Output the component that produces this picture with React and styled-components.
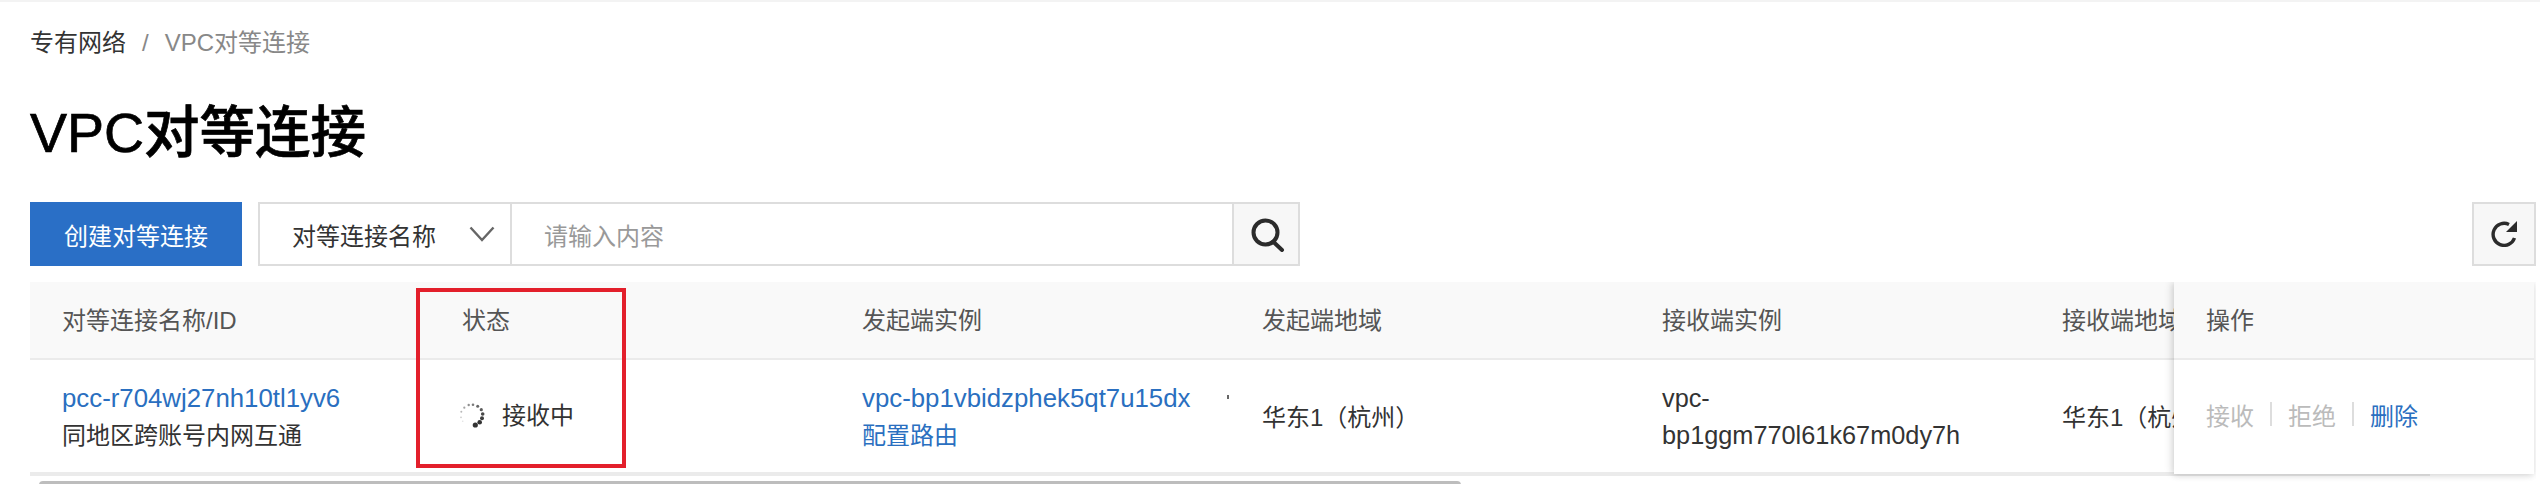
import React from "react";
import styled, { createGlobalStyle } from "styled-components";

const Global = createGlobalStyle`
  html, body { margin: 0; padding: 0; background: #fff; }
  body { font-family: "Liberation Sans", "Noto Sans CJK SC", sans-serif; font-size: 24px; color: #333; overflow: hidden; }
  * { box-sizing: border-box; }
`;

const Page = styled.div`
  width: 2540px;
  height: 484px;
  overflow: hidden;
  border-top: 2px solid #f3f3f3;
  padding: 0 4px 0 30px;
`;
const Breadcrumb = styled.nav`
  display: flex;
  align-items: center;
  height: 36px;
  margin-top: 23px;
  line-height: 36px;
`;
const Crumb = styled.span`
  color: ${(p) => (p.$current ? "#888" : "#333")};
`;
const CrumbSep = styled.span`
  color: #888;
  margin: 0 16px 0 16px;
`;
const Title = styled.h1`
  margin: 34px 0 0;
  font-size: 55.5px;
  line-height: 76px;
  font-weight: 500;
  color: #000;
  -webkit-text-stroke: 0.7px #000;
`;
const Toolbar = styled.div`
  display: flex;
  align-items: stretch;
  height: 64px;
  margin-top: 31px;
`;
const PrimaryButton = styled.button`
  width: 212px;
  border: 0;
  padding: 0;
  background: #2a6fc6;
  color: #fff;
  font: inherit;
`;
const SearchGroup = styled.div`
  display: flex;
  width: 1042px;
  margin-left: 16px;
  border: 2px solid #ddd;
`;
const SelectBox = styled.div`
  display: flex;
  align-items: center;
  justify-content: space-between;
  width: 252px;
  padding: 0 15px 0 32px;
  border-right: 2px solid #ddd;
  color: #333;
`;
const SearchInput = styled.div`
  flex: 1;
  display: flex;
  align-items: center;
  padding-left: 32px;
  color: #999;
`;
const IconButton = styled.div`
  display: flex;
  align-items: center;
  justify-content: center;
  background: #f7f7f7;
`;
const SearchButton = styled(IconButton)`
  width: 66px;
  padding: 2px 0 0 3px;
  border-left: 2px solid #ddd;
`;
const RefreshButton = styled(IconButton)`
  width: 64px;
  margin-left: auto;
  border: 2px solid #ddd;
`;
const TableWrap = styled.div`
  position: relative;
  margin-top: 16px;
  height: 202px;
  overflow: hidden;
`;
const Row = styled.div`
  display: grid;
  grid-template-columns: repeat(6, 400px);
  width: 2400px;
`;
const HeadRow = styled(Row)`
  height: 78px;
  background: #f9f9f9;
  border-bottom: 2px solid #ebebeb;
`;
const BodyRow = styled(Row)`
  height: 116px;
  border-bottom: 4px solid #ebebeb;
`;
const HeadCell = styled.div`
  display: flex;
  align-items: center;
  padding: 0 32px 3px;
  color: #555;
`;
const Cell = styled.div`
  display: flex;
  flex-direction: column;
  justify-content: center;
  padding: 2px 32px 0;
  line-height: 37px;
  color: #333;
`;
const Latin = styled.span`
  font-size: 25.3px;
  white-space: nowrap;
`;
const LinkLatin = styled(Latin)`
  font-size: 25.8px;
  color: #2a6fc0;
`;
const LinkText = styled.span`
  color: #2a6fc0;
`;
const InstanceLine = styled.span`
  position: relative;
  white-space: nowrap;
`;
const TinyDot = styled.i`
  position: absolute;
  left: 365px;
  top: 15px;
  width: 2px;
  height: 4px;
  background: #666;
`;
const StatusLine = styled.div`
  display: flex;
  align-items: center;
  gap: 17px;
  margin: -4px 0 0 -3px;
`;
const Scrollbar = styled.div`
  width: 1422px;
  height: 8px;
  margin: 5px 0 0 9px;
  border-radius: 4px;
  background: #bdbdbd;
`;
const FrozenPanel = styled.div`
  position: absolute;
  top: 0;
  right: 2px;
  width: 360px;
  height: 192px;
  background: #fff;
  box-shadow: -2px 0 8px rgba(0, 0, 0, 0.14), 0 2px 6px rgba(0, 0, 0, 0.08);
`;
const FrozenHead = styled(HeadCell)`
  height: 78px;
  background: #f9f9f9;
  border-bottom: 2px solid #ebebeb;
`;
const Actions = styled.div`
  display: flex;
  align-items: center;
  height: 114px;
  padding: 0 0 6px 32px;
`;
const Action = styled.span`
  color: ${(p) => (p.$disabled ? "#bbb" : "#2a6fc0")};
`;
const ActionSep = styled.i`
  width: 2px;
  height: 24px;
  margin: 0 16px;
  background: #ddd;
`;
const Highlight = styled.div`
  position: absolute;
  left: 386px;
  top: 6px;
  width: 210px;
  height: 180px;
  border: 4px solid #e31f2b;
`;

const spinnerDots = [
  [3.3, 10, 2.6, 1], [7.7, 7.3, 2.3, 1], [10, 3.3, 2, 0.95], [10.7, -1, 1.8, 0.9],
  [9.3, -5.3, 1.6, 0.8], [5.7, -8.7, 1.5, 0.75], [1, -10.3, 1.3, 0.65], [-3.3, -10, 1.2, 0.55],
  [-7.7, -7.3, 1.1, 0.45], [-10.7, -3.3, 1, 0.35], [-11, 2.3, 0.9, 0.25], [-9.3, 6.3, 0.8, 0.15],
];

const Spinner = () => (
  <svg width="26" height="26" viewBox="-13 -13 26 26">
    {spinnerDots.map(([x, y, r, o]) => (
      <circle key={`${x}${y}`} cx={x} cy={y} r={r} fill="#333" opacity={o} />
    ))}
  </svg>
);

const Chevron = () => (
  <svg width="26" height="16" viewBox="0 0 26 16" fill="none" stroke="#666" strokeWidth="2.4">
    <path d="M1.5 1.5 13 14 24.5 1.5" />
  </svg>
);

const SearchIcon = () => (
  <svg width="34" height="34" viewBox="0 0 34 34" fill="none" stroke="#2b2b2b" strokeWidth="4">
    <circle cx="14.5" cy="14.5" r="12" />
    <path d="M22 23.5 31 32" strokeLinecap="round" />
  </svg>
);

const RefreshIcon = () => (
  <svg width="26" height="26" viewBox="0 0 26 26" fill="none">
    <path d="M23.5 17A11 11 0 1 1 18 3.5" stroke="#2b2b2b" strokeWidth="3.4" />
    <path d="M26 0v11H15z" fill="#2b2b2b" />
  </svg>
);

export default function App() {
  return (
    <Page>
      <Global />
      <Breadcrumb>
        <Crumb>专有网络</Crumb>
        <CrumbSep>/</CrumbSep>
        <Crumb $current>VPC对等连接</Crumb>
      </Breadcrumb>
      <Title>VPC对等连接</Title>
      <Toolbar>
        <PrimaryButton>创建对等连接</PrimaryButton>
        <SearchGroup>
          <SelectBox>
            对等连接名称
            <Chevron />
          </SelectBox>
          <SearchInput>请输入内容</SearchInput>
          <SearchButton>
            <SearchIcon />
          </SearchButton>
        </SearchGroup>
        <RefreshButton>
          <RefreshIcon />
        </RefreshButton>
      </Toolbar>
      <TableWrap>
        <HeadRow>
          <HeadCell>对等连接名称/ID</HeadCell>
          <HeadCell>状态</HeadCell>
          <HeadCell>发起端实例</HeadCell>
          <HeadCell>发起端地域</HeadCell>
          <HeadCell>接收端实例</HeadCell>
          <HeadCell>接收端地域</HeadCell>
        </HeadRow>
        <BodyRow>
          <Cell>
            <LinkLatin>pcc-r704wj27nh10tl1yv6</LinkLatin>
            <span>同地区跨账号内网互通</span>
          </Cell>
          <Cell>
            <StatusLine>
              <Spinner />
              接收中
            </StatusLine>
          </Cell>
          <Cell>
            <InstanceLine>
              <LinkLatin>vpc-bp1vbidzphek5qt7u15dx</LinkLatin>
              <TinyDot />
            </InstanceLine>
            <LinkText>配置路由</LinkText>
          </Cell>
          <Cell>
            <span>华东1（杭州）</span>
          </Cell>
          <Cell>
            <Latin>vpc-</Latin>
            <Latin>bp1ggm770l61k67m0dy7h</Latin>
          </Cell>
          <Cell>
            <span>华东1（杭州）</span>
          </Cell>
        </BodyRow>
        <Scrollbar />
        <FrozenPanel>
          <FrozenHead>操作</FrozenHead>
          <Actions>
            <Action $disabled>接收</Action>
            <ActionSep />
            <Action $disabled>拒绝</Action>
            <ActionSep />
            <Action>删除</Action>
          </Actions>
        </FrozenPanel>
        <Highlight />
      </TableWrap>
    </Page>
  );
}
